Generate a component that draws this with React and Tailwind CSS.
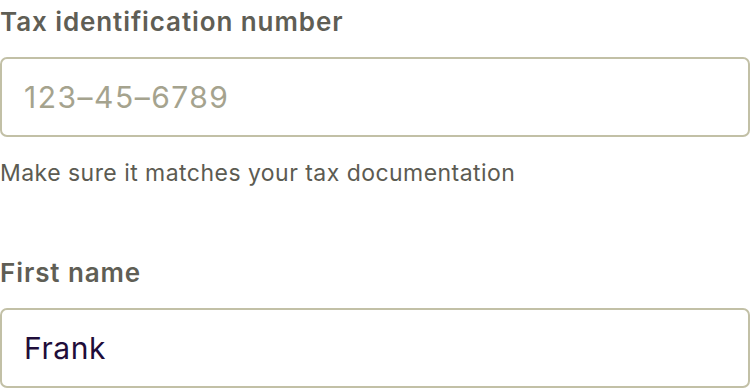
export default function App() {
  return (
    <div className="w-[750px] h-[388px] bg-white overflow-hidden" style={{ fontFamily: "Inter, 'Noto Sans', sans-serif" }}>
      <div className="flex flex-col">
        <label className="text-[26px] leading-[44px] font-semibold text-[#5f5e55] tracking-[0.035em]">Tax identification number</label>
        <div className="mt-[13px] h-[80px] rounded-[7px] border-2 border-[#c2c0a6] flex items-center px-[22px]">
          <span className="text-[30px] text-[#a5a38e] tracking-[0.05em]">123–45–6789</span>
        </div>
        <p className="mt-[20px] text-[23px] leading-[32px] text-[#5c5b52] tracking-[0.02em]">Make sure it matches your tax documentation</p>
        <label className="mt-[62px] text-[26px] leading-[44px] font-semibold text-[#5f5e55] tracking-[0.035em]">First name</label>
        <div className="mt-[13px] h-[80px] rounded-[7px] border-2 border-[#c2c0a6] flex items-center px-[22px]">
          <span className="text-[30px] text-[#1f0d3a] tracking-[0.02em]">Frank</span>
        </div>
      </div>
    </div>
  );
}
